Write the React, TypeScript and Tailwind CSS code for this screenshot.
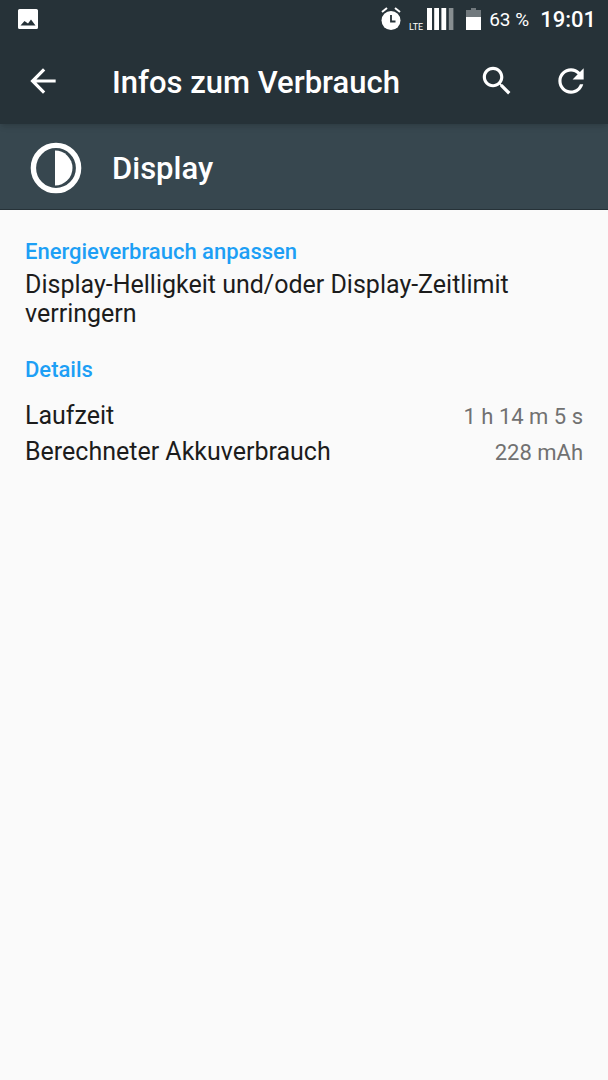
const details = [
  { label: 'Laufzeit', value: '1 h 14 m 5 s' },
  { label: 'Berechneter Akkuverbrauch', value: '228 mAh' },
];

const PhotoIcon = () => (
  <svg className="w-5 h-5" viewBox="0 0 20 20" aria-hidden="true">
    <path
      fill="currentColor"
      fillRule="evenodd"
      d="M1.6 0h16.8A1.6 1.6 0 0 1 20 1.6v16.8a1.6 1.6 0 0 1-1.6 1.6H1.6A1.6 1.6 0 0 1 0 18.4V1.6A1.6 1.6 0 0 1 1.6 0zM2.5 16.500h15L13 10.500l-3 4-3.500-2.500z"
    />
  </svg>
);

const AlarmIcon = () => (
  <svg className="w-5 h-6" viewBox="0 0 20 24" fill="none" stroke="currentColor" aria-hidden="true">
    <circle cx="10" cy="13.5" r="9.5" fill="currentColor" stroke="none" />
    <path strokeWidth="2" d="M1 5l5-4M19 5l-5-4" />
    <path stroke="#263238" strokeWidth="1.8" d="M10 8v6.500h4.500" />
  </svg>
);

const SignalIcon = () => (
  <svg className="w-[27px] h-[22px]" viewBox="0 0 27 22" fill="currentColor" aria-hidden="true">
    <path d="M0 0h5v22H0zM7.200 0h4.800v22H7.200zM14.400 0h4.800v22h-4.800z" />
    <path opacity=".45" d="M21.800 0h4.600v22h-4.600z" />
  </svg>
);

const BatteryIcon = () => (
  <svg className="w-[15px] h-[22px]" viewBox="0 0 15 22" fill="currentColor" aria-hidden="true">
    <path opacity=".35" d="M5 0h5v2h5v7H0V2h5z" />
    <path d="M0 9h15v13H0z" />
  </svg>
);

const ActionIcon = ({ d }: { d: string }) => (
  <svg className="w-[38px] h-[38px]" viewBox="0 0 24 24" fill="currentColor" aria-hidden="true">
    <path d={d} />
  </svg>
);

const BrightnessIcon = () => (
  <svg className="w-[52px] h-[52px]" viewBox="0 0 52 52" aria-hidden="true">
    <circle cx="26" cy="26" r="22.6" fill="none" stroke="currentColor" strokeWidth="5.4" />
    <path fill="currentColor" d="M25 8.500a17.500 17.500 0 0 1 0 35z" />
  </svg>
);

const StatusBar = () => (
  <div className="flex h-[38px] items-center justify-between pl-[18px] pr-3">
    <PhotoIcon />
    <div className="flex items-center">
      <AlarmIcon />
      <span className="ml-2 mr-1 self-end text-[9px] leading-[10px]">LTE</span>
      <SignalIcon />
      <div className="ml-3 mr-2">
        <BatteryIcon />
      </div>
      <span className="pt-[2px] text-[19px] leading-6">63 %</span>
      <span className="ml-[11px] pt-[2px] text-[22px] leading-6 font-medium">19:01</span>
    </div>
  </div>
);

const Toolbar = () => (
  <header className="flex h-[86px] items-center pl-6 pr-[18px]">
    <button type="button" aria-label="Zurück">
      <ActionIcon d="M20 11H7.83l5.590-5.590L12 4l-8 8 8 8 1.410-1.410L7.830 13H20v-2z" />
    </button>
    <h1 className="ml-[50px] flex-1 pt-[3px] text-[31px] leading-9 font-medium">
      Infos zum Verbrauch
    </h1>
    <button type="button" aria-label="Suchen">
      <ActionIcon d="M15.500 14h-.790l-.280-.270C15.410 12.590 16 11.110 16 9.500 16 5.910 13.090 3 9.500 3S3 5.910 3 9.500 5.910 16 9.500 16c1.610 0 3.090-.590 4.230-1.570l.270.280v.790l5 4.990L20.490 19l-4.990-5zm-6 0C7.010 14 5 11.990 5 9.500S7.010 5 9.500 5 14 7.010 14 9.500 11.990 14 9.500 14z" />
    </button>
    <button type="button" aria-label="Aktualisieren" className="ml-9">
      <ActionIcon d="M17.650 6.350C16.200 4.900 14.210 4 12 4c-4.420 0-7.990 3.580-7.990 8s3.570 8 7.990 8c3.730 0 6.840-2.550 7.730-6h-2.080c-.820 2.330-3.040 4-5.650 4-3.310 0-6-2.690-6-6s2.690-6 6-6c1.660 0 3.140.690 4.220 1.780L13 11h7V4l-2.350 2.350z" />
    </button>
  </header>
);

export const App = () => {
  return (
    <div className="min-h-screen bg-[#fafafa] font-[Roboto,sans-serif] text-[#1c1c1c]">
      <div className="relative bg-[#263238] text-white shadow-md">
        <StatusBar />
        <Toolbar />
      </div>

      {/* Selected consumer */}
      <div className="flex h-[86px] items-center gap-[30px] border-b border-[#263238] bg-[#37474f] pt-[2px] pl-[30px] text-white">
        <BrightnessIcon />
        <h2 className="pt-[2px] text-[31px] leading-9 font-medium">Display</h2>
      </div>

      <main className="px-[25px] pt-[27px]">
        <section>
          <h3 className="text-[22px] leading-[30px] font-medium text-[#1d9ff5]">
            Energieverbrauch anpassen
          </h3>
          <p className="mt-[3px] text-[25px] leading-[29px]">
            Display-Helligkeit und/oder Display-Zeitlimit verringern
          </p>
        </section>

        <section className="mt-[27px]">
          <h3 className="text-[22px] leading-[30px] font-medium text-[#1d9ff5]">Details</h3>
          <dl className="mt-[13px]">
            {details.map(({ label, value }) => (
              <div key={label} className="flex items-baseline justify-between leading-[35px]">
                <dt className="text-[25px]">{label}</dt>
                <dd className="text-[22px] text-[#717171]">{value}</dd>
              </div>
            ))}
          </dl>
        </section>
      </main>
    </div>
  );
};

export default App;
